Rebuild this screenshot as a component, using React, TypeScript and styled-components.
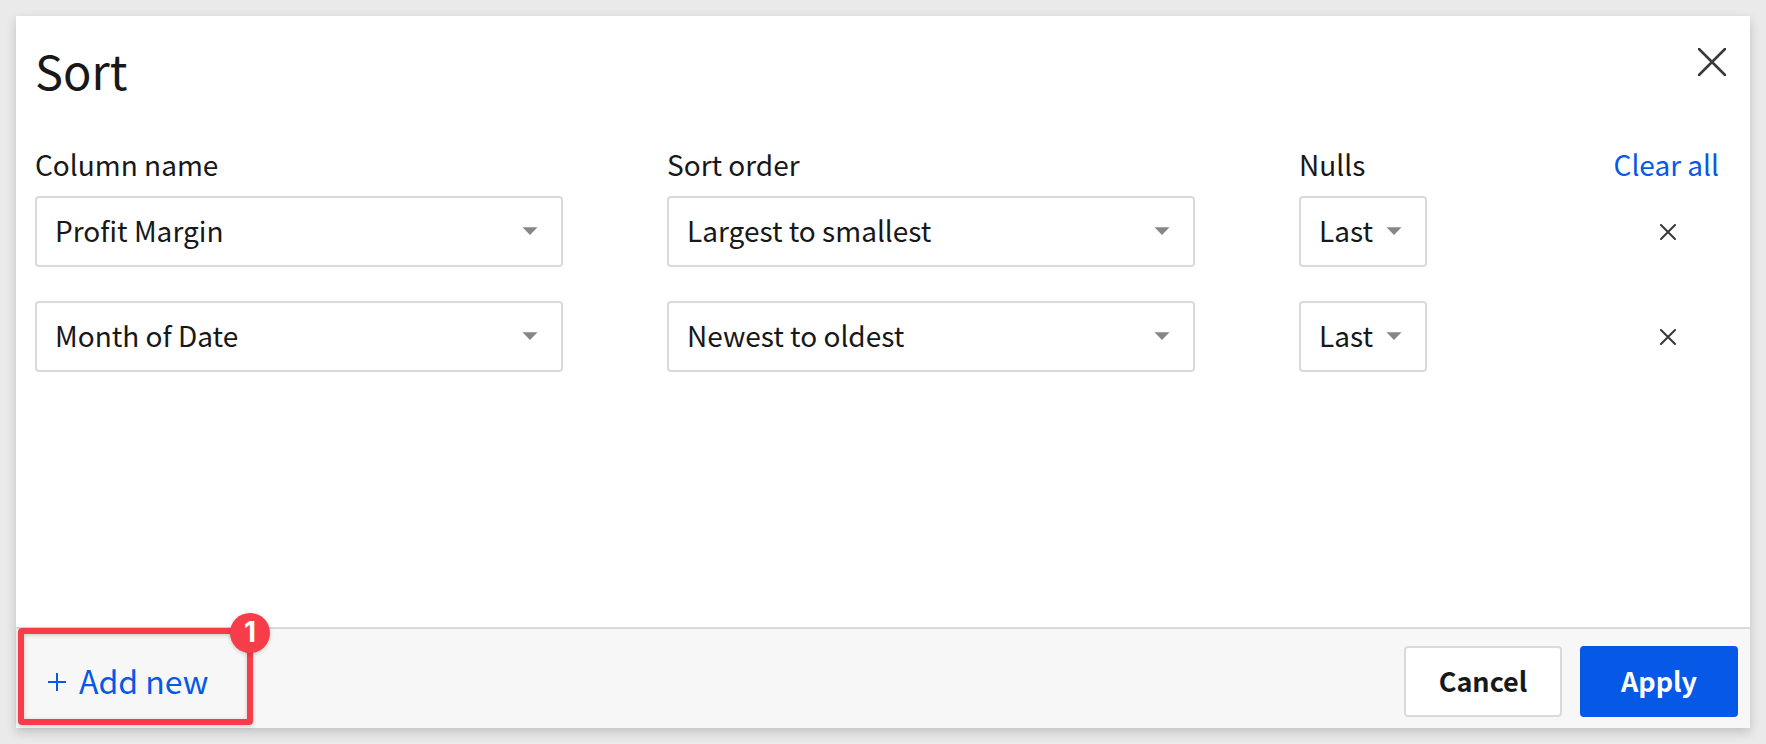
import React, { useState } from "react";
import styled, { createGlobalStyle } from "styled-components";

const GlobalStyle = createGlobalStyle`
  *, *::before, *::after { box-sizing: border-box; }
  body {
    margin: 0;
    background: #eaeaea;
    color: #171819;
    font-family: "Noto Sans CJK SC", "Open Sans", sans-serif;
    font-size: 28px;
    line-height: 40px;
  }
  button, select { font: inherit; color: inherit; }
`;

const Page = styled.div`
  display: flex;
  min-height: 100vh;
  padding: 16px;
`;

const Dialog = styled.form`
  display: flex;
  flex: 1;
  flex-direction: column;
  min-width: 0;
  background: #fff;
  box-shadow: 0 4px 10px rgba(0, 0, 0, 0.18);
`;

const Header = styled.header`
  display: flex;
  justify-content: space-between;
  align-items: flex-start;
  padding: 24px 16px 0 19px;
`;

const Title = styled.h1`
  margin: 0;
  font-size: 47px;
  line-height: 60px;
  font-weight: 400;
`;

const IconButton = styled.button<{ $width: number }>`
  display: flex;
  align-items: center;
  justify-content: center;
  width: ${(p) => p.$width}px;
  height: 44px;
  padding: 0;
  border: 0;
  background: none;
  color: #38393b;
  cursor: pointer;
`;

const Grid = styled.div`
  display: grid;
  grid-template-columns: minmax(0, 1fr) minmax(0, 1fr) 128px 188px;
  column-gap: 104px;
  row-gap: 34px;
  align-items: center;
  flex: 1;
  align-content: start;
  padding: 44px 31px 34px 19px;
`;

const Heading = styled.div`
  margin-bottom: -24px;
  height: 42px;
  white-space: nowrap;
`;

const End = styled.div`
  display: flex;
  justify-content: flex-end;
`;

const HeadingEnd = styled(Heading)`
  display: flex;
  justify-content: flex-end;
  align-items: flex-start;
`;

const LinkButton = styled.button`
  padding: 0;
  border: 0;
  background: none;
  color: #0559e6;
  cursor: pointer;
`;

const SelectBox = styled.div`
  position: relative;
  color: #868686;
`;

const Select = styled.select`
  display: block;
  width: 100%;
  height: 71px;
  padding: 0 48px 4px 18px;
  border: 2px solid #dadada;
  border-radius: 4px;
  background: #fff;
  color: #171819;
  appearance: none;
`;

const Arrow = styled.svg`
  position: absolute;
  top: 31px;
  right: 25px;
  pointer-events: none;
`;

const Footer = styled.footer`
  position: relative;
  display: flex;
  align-items: center;
  justify-content: space-between;
  padding: 17px 12px 11px 32px;
  border-top: 2px solid #dadada;
  background: #f7f7f7;
`;

const AddButton = styled(LinkButton)`
  display: flex;
  align-items: center;
  gap: 13px;
  font-size: 32px;

  span { padding-bottom: 4px; }
`;

const Actions = styled.div`
  display: flex;
  gap: 18px;
`;

const ActionButton = styled.button<{ $primary?: boolean }>`
  width: 158px;
  height: 71px;
  padding: 0 0 2px;
  border: 2px solid ${(p) => (p.$primary ? "#0559e6" : "#dadada")};
  border-radius: 4px;
  background: ${(p) => (p.$primary ? "#0559e6" : "#fff")};
  color: ${(p) => (p.$primary ? "#fff" : "#171819")};
  font-size: 27px;
  font-weight: 600;
  cursor: pointer;
`;

const Callout = styled.div`
  position: absolute;
  top: -1px;
  left: 2px;
  width: 235px;
  height: 97px;
  border: 6px solid #f73d49;
  border-radius: 4px;
  box-shadow: 0 1px 4px rgba(0, 0, 0, 0.2), inset 0 1px 4px rgba(0, 0, 0, 0.2);
  pointer-events: none;
`;

const CalloutBadge = styled.span`
  position: absolute;
  top: -21px;
  right: -23px;
  width: 40px;
  height: 40px;
  border-radius: 50%;
  background: #f73d49;
  box-shadow: 0 1px 4px rgba(0, 0, 0, 0.2);
  color: #fff;
  font-family: Inter, sans-serif;
  font-size: 28px;
  font-weight: 700;
  line-height: 38px;
  text-align: center;
`;

function Cross({ size, stroke }: { size: number; stroke: number }) {
  return (
    <svg width={size} height={size} viewBox={`0 0 ${size} ${size}`} aria-hidden="true">
      <path
        d={`M1 1L${size - 1} ${size - 1}M${size - 1} 1L1 ${size - 1}`}
        stroke="currentColor"
        strokeWidth={stroke}
        strokeLinecap="round"
      />
    </svg>
  );
}

function Dropdown({ label, value, options }: { label: string; value: string; options: string[] }) {
  const [current, setCurrent] = useState(value);
  return (
    <SelectBox>
      <Select aria-labelledby={label} value={current} onChange={(e) => setCurrent(e.target.value)}>
        {options.map((o) => (
          <option key={o}>{o}</option>
        ))}
      </Select>
      <Arrow width="16" height="8" viewBox="0 0 16 8" aria-hidden="true">
        <path d="M0.5 0.2H15.5L8 8Z" fill="currentColor" />
      </Arrow>
    </SelectBox>
  );
}

const columns = ["Profit Margin", "Month of Date"];
const nulls = ["Last", "First"];
const initialRows = [
  { column: "Profit Margin", order: "Largest to smallest", orders: ["Largest to smallest", "Smallest to largest"] },
  { column: "Month of Date", order: "Newest to oldest", orders: ["Newest to oldest", "Oldest to newest"] },
];

export default function App() {
  const [rows, setRows] = useState(initialRows);
  return (
    <>
      <GlobalStyle />
      <Page>
        <Dialog role="dialog" aria-labelledby="title" onSubmit={(e) => e.preventDefault()}>
          <Header>
            <Title id="title">Sort</Title>
            <IconButton type="button" $width={44} aria-label="Close">
              <Cross size={28} stroke={2.5} />
            </IconButton>
          </Header>
          <Grid>
            <Heading id="column-name">Column name</Heading>
            <Heading id="sort-order">Sort order</Heading>
            <Heading id="nulls">Nulls</Heading>
            <HeadingEnd>
              <LinkButton type="button" onClick={() => setRows([])}>
                Clear all
              </LinkButton>
            </HeadingEnd>
            {rows.map((row) => (
              <React.Fragment key={row.column}>
                <Dropdown label="column-name" value={row.column} options={columns} />
                <Dropdown label="sort-order" value={row.order} options={row.orders} />
                <Dropdown label="nulls" value="Last" options={nulls} />
                <End>
                  <IconButton
                    type="button"
                    $width={102}
                    aria-label={`Remove ${row.column}`}
                    onClick={() => setRows(rows.filter((r) => r !== row))}
                  >
                    <Cross size={16} stroke={2} />
                  </IconButton>
                </End>
              </React.Fragment>
            ))}
          </Grid>
          <Footer>
            <AddButton type="button">
              <svg width="18" height="18" viewBox="0 0 18 18" aria-hidden="true">
                <path d="M9 0V18M0 9H18" stroke="currentColor" strokeWidth="2" />
              </svg>
              <span>Add new</span>
            </AddButton>
            <Actions>
              <ActionButton type="button">Cancel</ActionButton>
              <ActionButton type="submit" $primary>
                Apply
              </ActionButton>
            </Actions>
            <Callout>
              <CalloutBadge>1</CalloutBadge>
            </Callout>
          </Footer>
        </Dialog>
      </Page>
    </>
  );
}
